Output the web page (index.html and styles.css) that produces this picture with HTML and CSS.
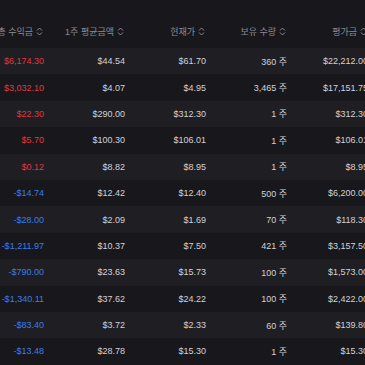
FILE: index.html
```html
<!DOCTYPE html>
<html lang="ko">
<head>
  <meta charset="UTF-8">
  <meta name="viewport" content="width=device-width, initial-scale=1.0">
  <title>보유 종목</title>
  <link rel="stylesheet" href="styles.css">
</head>
<body>
  <div class="holdings">
    <div class="row head">
      <div class="cell">총 수익금 <svg class="sort" viewBox="0 0 7 9"><path d="M1 3.5 L3.5 1 L6 3.5 M1 5.5 L3.5 8 L6 5.5"/></svg></div>
      <div class="cell">1주 평균금액 <svg class="sort" viewBox="0 0 7 9"><path d="M1 3.5 L3.5 1 L6 3.5 M1 5.5 L3.5 8 L6 5.5"/></svg></div>
      <div class="cell">현재가 <svg class="sort" viewBox="0 0 7 9"><path d="M1 3.5 L3.5 1 L6 3.5 M1 5.5 L3.5 8 L6 5.5"/></svg></div>
      <div class="cell">보유 수량 <svg class="sort" viewBox="0 0 7 9"><path d="M1 3.5 L3.5 1 L6 3.5 M1 5.5 L3.5 8 L6 5.5"/></svg></div>
      <div class="cell">평가금 <svg class="sort" viewBox="0 0 7 9"><path d="M1 3.5 L3.5 1 L6 3.5 M1 5.5 L3.5 8 L6 5.5"/></svg></div>
    </div>
    <div class="row"><div class="cell up">$6,174.30</div><div class="cell">$44.54</div><div class="cell">$61.70</div><div class="cell">360 주</div><div class="cell">$22,212.00</div></div>
    <div class="row"><div class="cell up">$3,032.10</div><div class="cell">$4.07</div><div class="cell">$4.95</div><div class="cell">3,465 주</div><div class="cell">$17,151.75</div></div>
    <div class="row"><div class="cell up">$22.30</div><div class="cell">$290.00</div><div class="cell">$312.30</div><div class="cell">1 주</div><div class="cell">$312.30</div></div>
    <div class="row"><div class="cell up">$5.70</div><div class="cell">$100.30</div><div class="cell">$106.01</div><div class="cell">1 주</div><div class="cell">$106.01</div></div>
    <div class="row"><div class="cell up">$0.12</div><div class="cell">$8.82</div><div class="cell">$8.95</div><div class="cell">1 주</div><div class="cell">$8.95</div></div>
    <div class="row"><div class="cell down">-$14.74</div><div class="cell">$12.42</div><div class="cell">$12.40</div><div class="cell">500 주</div><div class="cell">$6,200.00</div></div>
    <div class="row"><div class="cell down">-$28.00</div><div class="cell">$2.09</div><div class="cell">$1.69</div><div class="cell">70 주</div><div class="cell">$118.30</div></div>
    <div class="row"><div class="cell down">-$1,211.97</div><div class="cell">$10.37</div><div class="cell">$7.50</div><div class="cell">421 주</div><div class="cell">$3,157.50</div></div>
    <div class="row"><div class="cell down">-$790.00</div><div class="cell">$23.63</div><div class="cell">$15.73</div><div class="cell">100 주</div><div class="cell">$1,573.00</div></div>
    <div class="row"><div class="cell down">-$1,340.11</div><div class="cell">$37.62</div><div class="cell">$24.22</div><div class="cell">100 주</div><div class="cell">$2,422.00</div></div>
    <div class="row"><div class="cell down">-$83.40</div><div class="cell">$3.72</div><div class="cell">$2.33</div><div class="cell">60 주</div><div class="cell">$139.80</div></div>
    <div class="row"><div class="cell down">-$13.48</div><div class="cell">$28.78</div><div class="cell">$15.30</div><div class="cell">1 주</div><div class="cell">$15.30</div></div>
  </div>
</body>
</html>
```

FILE: styles.css
```css
:root {
  --color-bg: #18181c;
  --color-row-alt: #1e1e23;
  --color-text: #d2d2d8;
  --color-muted: #8a8a94;
  --color-up: #e0363f;
  --color-down: #3b7de6;
}

html, body {
  margin: 0;
  overflow: hidden;
}

body {
  background: var(--color-bg);
  color: var(--color-text);
  font-family: "Liberation Sans", "Noto Sans CJK KR", sans-serif;
  font-size: 9px;
}

.holdings {
  margin-left: -37px;
  width: 405px;
}

.row {
  display: grid;
  grid-template-columns: repeat(5, 81px);
  height: 26.4px;
  align-items: center;
}

.row:nth-child(even) {
  background: var(--color-row-alt);
}

.row.head {
  height: 48px;
  align-items: end;
  padding-bottom: 10px;
  box-sizing: border-box;
  color: var(--color-muted);
}

.cell {
  display: flex;
  justify-content: flex-end;
  align-items: center;
  gap: 3px;
  white-space: nowrap;
}

.head .cell {
  padding-right: 1px;
}

.sort {
  width: 7px;
  height: 9px;
  fill: none;
  stroke: var(--color-muted);
  stroke-width: 1;
}

.up {
  color: var(--color-up);
}

.down {
  color: var(--color-down);
}
```
